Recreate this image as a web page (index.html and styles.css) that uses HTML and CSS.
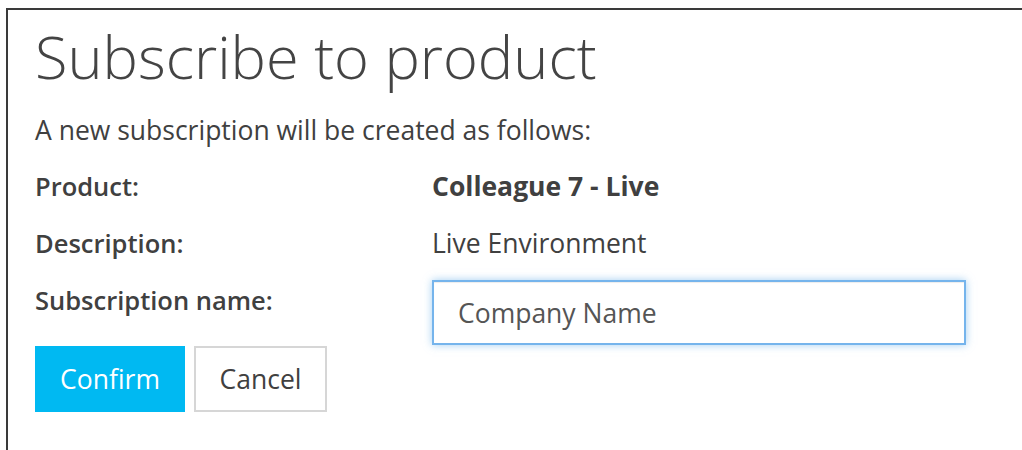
FILE: index.html
```html
<!DOCTYPE html>
<html lang="en">
<head>
<meta charset="utf-8">
<title>Subscribe to product</title>
<link rel="stylesheet" href="styles.css">
</head>
<body>
<div class="panel">
  <h1 class="title">Subscribe to product</h1>
  <p class="intro">A new subscription will be created as follows:</p>
  <form class="details">
    <div class="label">Product:</div>
    <div class="value strong">Colleague 7 - Live</div>
    <div class="label">Description:</div>
    <div class="value">Live Environment</div>
    <label class="label" for="subName">Subscription name:</label>
    <div class="value">
      <input id="subName" class="field" type="text" value="Company Name">
    </div>
    <div class="actions">
      <button type="button" class="btn btn-primary">Confirm</button>
      <button type="button" class="btn btn-default">Cancel</button>
    </div>
  </form>
</div>
</body>
</html>
```
FILE: styles.css
```css
* { box-sizing: border-box; }

html, body {
  margin: 0;
  background: #fff;
  height: 100%;
  overflow: hidden;
}

body {
  font-family: "Open Sans", "Noto Sans", sans-serif;
  color: #404040;
}

.panel {
  margin: 8px 0 0 6px;
  border-top: 2px solid #3a3a3a;
  border-left: 2px solid #3a3a3a;
  padding: 10px 0 0 27px;
  height: 442px;
}

.title {
  margin: 0;
  font-weight: 300;
  font-size: 59.5px;
  line-height: 72px;
  color: #444;
}

.intro {
  margin: 20px 0 0;
  font-size: 26.5px;
  line-height: 36px;
}

.details {
  display: grid;
  grid-template-columns: 397px 534px;
  grid-template-rows: 57px 57px auto auto;
  align-items: start;
  margin-top: 20px;
  font-size: 26.5px;
  line-height: 36px;
}

.label {
  font-weight: 600;
  font-size: 25.5px;
}

.value.strong {
  font-weight: 700;
}

.field {
  display: block;
  width: 534px;
  height: 65px;
  margin-top: -2px;
  padding: 0 24px;
  border: 2px solid #75b4ec;
  border-radius: 0;
  box-shadow: inset 0 1px 1px rgba(0,0,0,.075), 0 0 8px rgba(102,175,233,.6);
  font: inherit;
  color: #555;
  outline: none;
  background: #fff;
}

.actions {
  grid-column: 1 / -1;
  display: flex;
  gap: 9px;
  margin-top: 1px;
}

.btn {
  height: 66px;
  padding: 0;
  font: inherit;
  border-radius: 0;
  cursor: pointer;
}

.btn-primary {
  background: #00b9f2;
  border: 1px solid #00b9f2;
  color: #fff;
  width: 150px;
}

.btn-default {
  background: #fff;
  border: 2px solid #d6d6d6;
  color: #404040;
  width: 133px;
}
```
